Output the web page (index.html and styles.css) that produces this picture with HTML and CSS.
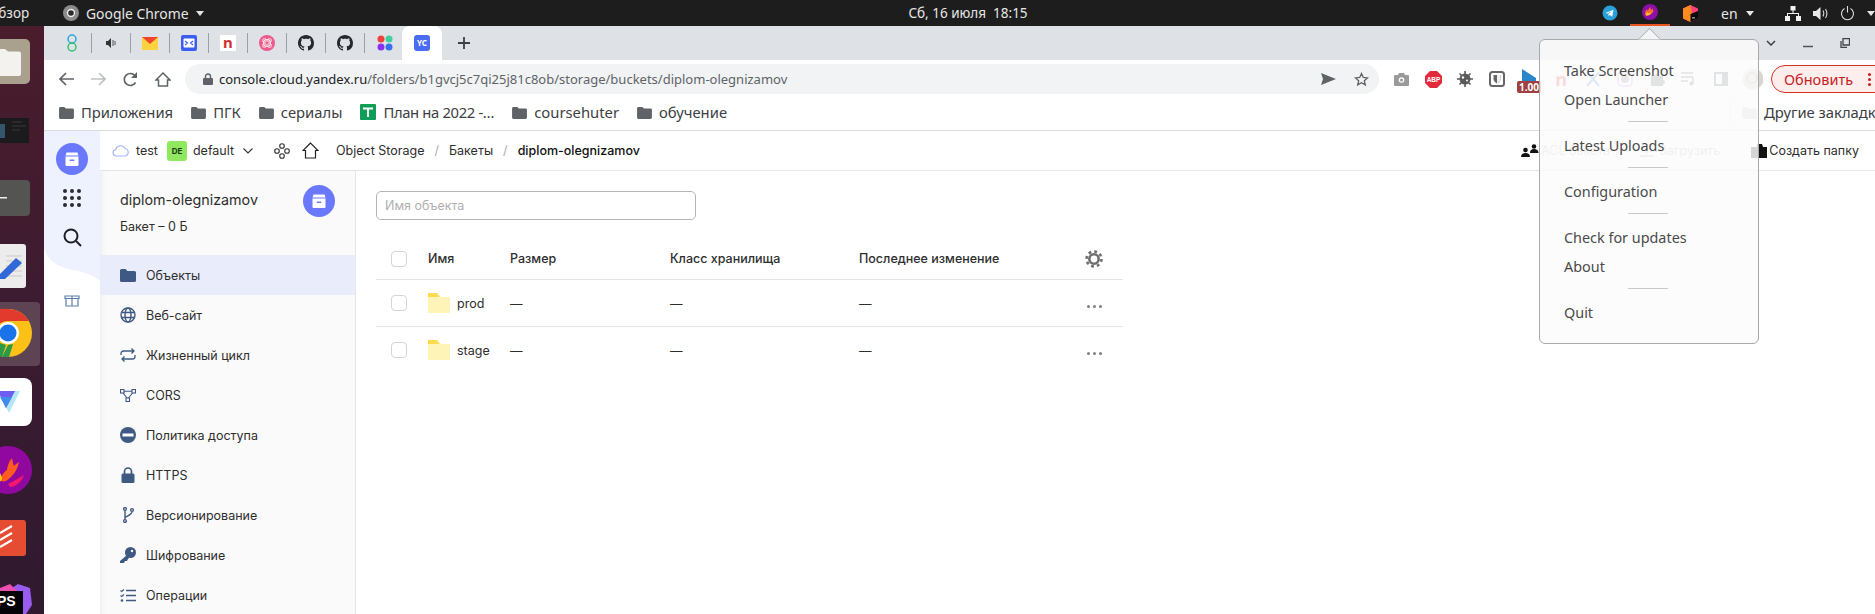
FILE: index.html
```html
<!DOCTYPE html>
<html>
  <head>
    <meta charset="utf-8">
    <link rel="stylesheet" href="styles.css">
  </head>
  <body>
    <svg class="defs" width="0" height="0">
      <symbol id="bm-folder" viewBox="0 0 16 14"><path d="M1.5 1h4.2l1.6 1.8h7.2c.8 0 1.5.6 1.5 1.4v8.3c0 .8-.7 1.5-1.5 1.5h-13C.7 14 0 13.300 0 12.500V2.500C0 1.700.7 1 1.500 1z" fill="#5f6368"/></symbol>
      <symbol id="octocat" viewBox="0 0 16 16"><path d="M8 0C3.580 0 0 3.580 0 8c0 3.540 2.290 6.530 5.470 7.590.4.07.55-.17.55-.38 0-.19-.01-.82-.01-1.490-2.010.37-2.530-.49-2.690-.94-.09-.23-.48-.94-.82-1.130-.28-.15-.68-.52-.01-.53.63-.01 1.080.58 1.230.82.72 1.210 1.870.87 2.330.66.07-.52.28-.87.51-1.070-1.780-.2-3.640-.89-3.640-3.950 0-.87.31-1.590.82-2.150-.08-.2-.36-1.020.08-2.120 0 0 .67-.21 2.200.82.64-.18 1.320-.27 2-.27.68 0 1.360.09 2 .27 1.530-1.040 2.200-.82 2.200-.82.44 1.100.16 1.920.08 2.120.51.56.82 1.270.82 2.150 0 3.070-1.870 3.750-3.650 3.950.29.25.54.73.54 1.480 0 1.070-.01 1.930-.01 2.200 0 .21.15.46.55.38A8.013 8.013 0 0016 8c0-4.420-3.580-8-8-8z" fill="#24292e"/></symbol>
      <symbol id="bucket" viewBox="0 0 32 32"><circle cx="16" cy="16" r="16" fill="#6a78fb"/><path d="M10.500 9.500h11l1 3h-13zM9.500 13.500h13v8.500a1 1 0 0 1-1 1h-11a1 1 0 0 1-1-1z" fill="#fff"/><rect x="13.500" y="16.500" width="5" height="1.600" rx=".8" fill="#6a78fb"/></symbol>
      <symbol id="row-folder" viewBox="0 0 22 20"><path d="M0 0h9l3 4H0z" fill="#ffdb4d"/><rect y="4" width="22" height="16" fill="#fff4b8"/></symbol>
    </svg>

    <div class="topbar">
      <span class="activities">Обзор</span>
      <span class="app-name">
        <svg width="16" height="16" viewBox="0 0 16 16"><circle cx="8" cy="8" r="8" fill="#8b8b8b"/><circle cx="8" cy="8" r="3.500" fill="#2b2b2b" stroke="#eee" stroke-width="1.400"/></svg>
        Google Chrome <i class="caret"></i>
      </span>
      <span class="clock">Сб, 16 июля&nbsp; 18:15</span>
      <div class="tray">
        <span class="tray-item">
          <svg width="16" height="16" viewBox="0 0 16 16"><circle cx="8" cy="8" r="7.500" fill="#2a9fd8"/><path d="M3.500 8l8-3.200-1.300 6.900-2.500-1.800-1.200 1.200-.2-2.200 3.400-2.700-4.300 2.400z" fill="#fff"/></svg>
        </span>
        <span class="tray-item tray-active">
          <svg width="16" height="16" viewBox="0 0 16 16"><circle cx="8" cy="8" r="8" fill="#8c0fa8"/><path d="M3 11c-.5-3 1-4.500 2-6 .3 1 .6 1.500 1 2 .3-1.500 1-3 2.500-4-.2 1.500.2 2.500.8 3 .4-.8 1-1.300 1.800-1.500-.2 1-.1 2 .4 2.500-1 2.500-3 4-5.500 4.500-1 .2-2 .2-3-.5z" fill="#ff6a2b"/><path d="M4 11.500c0-1.500.8-2.500 1.500-3.500.3 1 .8 1.300 1.300 1.500L9 8c-.4 2.200-2.500 4-5 3.500z" fill="#ffd21f"/></svg>
        </span>
        <span class="tray-item">
          <svg width="15" height="17" viewBox="0 0 15 17"><path d="M7.500 0L15 3.500v10L7.500 17 0 13.500v-10z" fill="#ff3f7a"/><path d="M0 3.500L7.500 0 9 8 7.500 17 0 13.500z" fill="#ff8a1f"/><path d="M15 6v7.500L7.500 17V9z" fill="#0b0b0b"/><rect x="9" y="12.500" width="3" height=".8" fill="#fff"/></svg>
        </span>
        <span class="lang">en <i class="caret"></i></span>
        <span class="sys-icons">
          <svg width="16" height="15" viewBox="0 0 16 15"><path d="M5.500 0h5v4.500h-5zM0 10h5v5H0zM11 10h5v5h-5zM7.500 4.500h1V7H14v3h-1V8H3v2H2V7h5.500z" fill="#f2f2f2"/></svg>
          <svg width="15" height="15" viewBox="0 0 15 15"><path d="M0 5h3l4.500-4v13L3 10H0z" fill="#e8e8e8"/><path d="M10 4.500c1 1.500 1 4.500 0 6M12.500 3c1.800 2.500 1.800 6.500 0 9" fill="none" stroke="#cfcfcf" stroke-width="1.200"/></svg>
          <svg width="15" height="15" viewBox="0 0 15 15"><path d="M4.500 2.500a6 6 0 1 0 6 0M7.500 0v6.500" fill="none" stroke="#e0e0e0" stroke-width="1.100"/></svg>
          <i class="caret"></i>
        </span>
      </div>
    </div>

    <div class="desktop">
      <svg class="dock" width="44" height="588" viewBox="0 26 44 588">
        <defs>
          <linearGradient id="dock-bg" x1="0" y1="0" x2="0" y2="1"><stop offset="0" stop-color="#4a1d2c"/><stop offset=".45" stop-color="#3d1b30"/><stop offset="1" stop-color="#2f1a30"/></linearGradient>
        </defs>
        <rect y="26" width="44" height="588" fill="url(#dock-bg)"/>
        <rect x="-10" y="39" width="40" height="45" rx="5" fill="#a9a18d"/>
        <path d="M-6 49h11l3 2.500h11a2 2 0 0 1 2 2V74a2 2 0 0 1-2 2H-6z" fill="#f4f2ee"/>
        <rect x="0" y="118" width="29" height="25" fill="#1b1b1d"/>
        <rect x="0" y="124" width="5" height="14" fill="#34556b"/>
        <path d="M12 122h10M12 126h14M12 130h8" stroke="#3a3a3a"/>
        <rect x="-10" y="180" width="40" height="36" rx="4" fill="#545452"/>
        <rect x="0" y="197" width="7" height="1.500" fill="#f0f0f0"/>
        <rect x="-10" y="244" width="36" height="44" rx="3" fill="#ececec"/>
        <path d="M6 256h16M6 261h16M6 266h16M6 271h16M6 276h16" stroke="#c9c9c9"/>
        <path d="M0 274L16 258l6 5L5 279l-5 0z" fill="#3068d8"/>
        <rect x="-10" y="302" width="50" height="64" rx="4" fill="#5e4453"/>
        <circle cx="8" cy="333" r="24" fill="#fbc116"/>
        <path d="M8 309a24 24 0 0 1 21 12H8a12 12 0 0 0-12 8l-8-14A24 24 0 0 1 8 309z" fill="#e23b2e"/>
        <path d="M-12 345L0 343l6 2-4 12A24 24 0 0 1-12 345z" fill="#2a9a49"/>
        <path d="M2 357l6-12 5-1-4 13z" fill="#2a9a49"/>
        <circle cx="8" cy="333" r="11" fill="#fff"/>
        <circle cx="8" cy="333" r="8.500" fill="#1a73e8"/>
        <rect x="-10" y="378" width="42" height="48" rx="8" fill="#fff"/>
        <path d="M-2 391h22l-11 22z" fill="#b4e6f5"/>
        <path d="M-2 391h17l-9 17z" fill="#6f5cf0"/>
        <path d="M0 397h12l-6 11z" fill="#3f8cea"/>
        <circle cx="8" cy="470" r="24" fill="#90089f"/>
        <path d="M0 480c3-8 7-10 7-10 .5-4 2-9 5-12 .5 3 1 6 2 8 1-1 3-3 5-4-1 6-5 14-13 19-3 1-5 0-6-1z" fill="#ff5a1f"/>
        <path d="M8 484c6-3 11-6 16-9-2 6-8 12-14 12z" fill="#f4176b"/>
        <path d="M-4 470c3 2 5 3 6 8 0 3-2 4-6 4z" fill="#ffc712"/>
        <rect x="-10" y="520" width="36" height="36" rx="3" fill="#e54c32"/>
        <path d="M0 533l12-7M0 540l12-7M0 547l12-7" stroke="#fff" stroke-width="2.200"/>
        <path d="M6 592l12-8 12 4 2 17-6 9H0z" fill="#9a5bf0"/>
        <path d="M0 588l10-4 8 8H0z" fill="#e84fae"/>
        <rect x="0" y="591" width="23" height="23" fill="#050208"/>
        <text class="dock-ps" x="-3" y="606">PS</text>
      </svg>

      <div class="browser">
        <div class="tabstrip">
          <div class="fav-tab">
            <svg width="16" height="18" viewBox="0 0 16 18"><circle cx="8" cy="5" r="4" fill="none" stroke="#29a8e0" stroke-width="1.500"/><circle cx="8" cy="13" r="4" fill="none" stroke="#35c46b" stroke-width="1.500"/></svg>
          </div>
          <div class="fav-tab">
            <svg width="10" height="10" viewBox="0 0 10 10"><path d="M0 3h2l3-3v10L2 7H0z" fill="#333"/><path d="M7 2v6M9 3v4" stroke="#555"/></svg>
          </div>
          <div class="fav-tab">
            <svg width="16" height="13" viewBox="0 0 16 13"><rect width="16" height="13" fill="#fcd33e"/><path d="M0 0h16L8 7z" fill="#f0452a"/></svg>
          </div>
          <div class="fav-tab">
            <svg width="16" height="16" viewBox="0 0 16 16"><rect width="16" height="16" rx="2" fill="#3c5ef0"/><rect x="2.500" y="3.500" width="11" height="9" rx="1" fill="#fff"/><path d="M4 6l2.500 2L4 10M12 6L9.500 8l2.500 2" fill="none" stroke="#3c5ef0" stroke-width="1.200"/></svg>
          </div>
          <div class="fav-tab"><span class="fav-n">n</span></div>
          <div class="fav-tab">
            <svg width="16" height="16" viewBox="0 0 16 16"><circle cx="8" cy="8" r="8" fill="#ee5a8a"/><circle cx="8" cy="8" r="3.500" fill="none" stroke="#fff" stroke-width="1.200"/><circle cx="5.500" cy="5.500" r="2" fill="none" stroke="#ffd0df"/><circle cx="10.500" cy="5.500" r="2" fill="none" stroke="#ffd0df"/><circle cx="5.500" cy="10.500" r="2" fill="none" stroke="#ffd0df"/><circle cx="10.500" cy="10.500" r="2" fill="none" stroke="#ffd0df"/></svg>
          </div>
          <div class="fav-tab"><svg width="16" height="16"><use href="#octocat"/></svg></div>
          <div class="fav-tab"><svg width="16" height="16"><use href="#octocat"/></svg></div>
          <div class="fav-tab fav-last">
            <svg width="16" height="16" viewBox="0 0 16 16"><circle cx="4" cy="4" r="3.500" fill="#f0413c"/><circle cx="12" cy="4" r="3.500" fill="#3fcf9f"/><circle cx="4" cy="12" r="3.500" fill="#8a2ff0"/><circle cx="12" cy="12" r="3.500" fill="#3570f0"/></svg>
          </div>
          <div class="tab-active"><span class="fav-yc">YC</span></div>
          <svg class="new-tab" width="12" height="12" viewBox="0 0 12 12"><path d="M6 0v12M0 6h12" stroke="#3c4043" stroke-width="1.800"/></svg>
          <div class="win-controls">
            <svg width="10" height="6" viewBox="0 0 10 6"><path d="M1 1l4 4 4-4" fill="none" stroke="#3c4043" stroke-width="1.500"/></svg>
            <svg width="10" height="10" viewBox="0 0 10 10"><path d="M0 8.500h10" stroke="#555" stroke-width="1.500"/></svg>
            <svg width="10" height="10" viewBox="0 0 10 10"><path d="M3 .5h6.500V7H3zM1 3v6.500h6" fill="none" stroke="#444" stroke-width="1.300"/></svg>
            <svg width="8" height="10" viewBox="0 0 8 10"><path d="M0 1l8 8M8 1L0 9" stroke="#444" stroke-width="1.500"/></svg>
          </div>
        </div>

        <div class="toolbar">
          <svg width="15" height="14" viewBox="0 0 15 14"><path d="M15 7H2M7 1L1 7l6 6" fill="none" stroke="#5f6368" stroke-width="1.700"/></svg>
          <svg class="nav-next" width="15" height="14" viewBox="0 0 15 14"><path d="M0 7h13M8 1l6 6-6 6" fill="none" stroke="#bdc1c6" stroke-width="1.700"/></svg>
          <svg class="nav-next" width="15" height="15" viewBox="0 0 15 15"><path d="M12.500 10.500a6 6 0 1 1-.3-6.500" fill="none" stroke="#5f6368" stroke-width="1.700"/><path d="M14 0v6H8z" fill="#5f6368"/></svg>
          <svg class="nav-next" width="16" height="15" viewBox="0 0 16 15"><path d="M8 1L1 8h2.500v6h9V8H15z" fill="none" stroke="#5f6368" stroke-width="1.500"/></svg>
          <div class="omnibox">
            <svg width="10" height="12" viewBox="0 0 10 12"><path d="M2.500 5V3.500a2.500 2.500 0 0 1 5 0V5" fill="none" stroke="#5f6368" stroke-width="1.400"/><rect y="5" width="10" height="7" rx="1" fill="#5f6368"/></svg>
            <span class="url"><b>console.cloud.yandex.ru</b>/folders/b1gvcj5c7qi25j81c8ob/storage/buckets/diplom-olegnizamov</span>
            <svg class="omni-send" width="15" height="12" viewBox="0 0 15 12"><path d="M0 0l15 6-15 6 2-6z" fill="#5f6368"/></svg>
            <svg class="omni-star" width="15" height="15" viewBox="0 0 15 15"><path d="M7.500 1.500l1.800 4 4.200.4-3.200 2.800 1 4.200-3.800-2.200-3.800 2.200 1-4.200L1.500 5.900l4.200-.4z" fill="none" stroke="#5f6368" stroke-width="1.300"/></svg>
          </div>
          <div class="extensions">
            <span class="ext"><svg width="15" height="13" viewBox="0 0 15 13"><path d="M1 2h3l1-2h5l1 2h3a1 1 0 0 1 1 1v9a1 1 0 0 1-1 1H1a1 1 0 0 1-1-1V3a1 1 0 0 1 1-1z" fill="#9a9a9a"/><circle cx="7.500" cy="7" r="2.800" fill="#fff"/><circle cx="7.500" cy="7" r="1.500" fill="#9a9a9a"/></svg></span>
            <span class="ext"><svg width="17" height="17" viewBox="0 0 17 17"><path d="M5 0h7l5 5v7l-5 5H5l-5-5V5z" fill="#e3293c"/><text class="abp" x="8.500" y="11">ABP</text></svg></span>
            <span class="ext"><svg width="16" height="16" viewBox="0 0 16 16"><circle cx="8" cy="8" r="5.500" fill="#5a5a5a"/><path d="M8 0v16M0 8h16M2.500 2.500l11 11M13.500 2.500l-11 11" stroke="#5a5a5a" stroke-width="1.600"/><circle cx="6" cy="6.500" r="1.200" fill="#fff"/><circle cx="10" cy="9.500" r="1" fill="#fff"/></svg></span>
            <span class="ext"><svg width="16" height="16" viewBox="0 0 16 16"><rect x="1" y="1" width="14" height="14" rx="2.500" fill="#fff" stroke="#666" stroke-width="2"/><path d="M4.500 4h7v4c0 2-1.500 3.200-3.500 4.500C6 11.200 4.500 10 4.500 8z" fill="#666"/><path d="M8 4h3.500v4c0 2-1.500 3.200-3.500 4.500z" fill="#eee"/></svg></span>
            <span class="ext ext-flag">
              <svg width="16" height="12" viewBox="0 0 16 12"><path d="M1 0l14 9v3H1z" fill="#2a86c8"/></svg>
              <span class="ext-badge">1.00</span>
            </span>
            <span class="ext"><span class="ext-n">n</span></span>
            <span class="ext"><svg width="16" height="16" viewBox="0 0 16 16"><path d="M2 15C6 10 10 6 14 1M2 1c4 5 8 9 12 14" fill="none" stroke="#3f7fe0" stroke-width="2"/></svg></span>
            <span class="ext"><svg width="16" height="16" viewBox="0 0 16 16"><rect x="1" y="1" width="14" height="14" rx="4" fill="none" stroke="#e0a0f0" stroke-width="2"/><circle cx="8" cy="8" r="4" fill="#888"/></svg></span>
            <span class="ext"><svg width="15" height="15" viewBox="0 0 15 15"><path d="M1 4h3.500a2 2 0 0 1 4 0H13v4a2 2 0 0 1 0 4v2H1z" fill="#5f6368"/></svg></span>
            <span class="ext"><svg width="16" height="14" viewBox="0 0 16 14"><path d="M0 1h12M0 5h12M0 9h7" stroke="#5f6368" stroke-width="1.500"/><path d="M12 5v6" stroke="#5f6368" stroke-width="1.500"/><circle cx="10.500" cy="11.500" r="2" fill="#5f6368"/></svg></span>
            <span class="ext"><svg width="14" height="14" viewBox="0 0 14 14"><rect x="1" y="1" width="12" height="12" fill="none" stroke="#5f6368" stroke-width="2"/><rect x="8" y="1" width="5" height="12" fill="#5f6368"/></svg></span>
            <span class="ext ext-avatar"><svg width="20" height="22" viewBox="0 0 20 22"><circle cx="15" cy="11" r="5" fill="#2fd37a"/><circle cx="10" cy="11" r="10.500" fill="#d9d5d0"/><circle cx="9" cy="10" r="5" fill="none" stroke="#b5a89c" stroke-width="2"/></svg></span>
          </div>
          <div class="update-btn"><span>Обновить</span><i class="kebab"></i></div>
        </div>

        <div class="bookmarks">
          <span class="bm"><svg width="15" height="13"><use href="#bm-folder"/></svg>Приложения</span>
          <span class="bm"><svg width="15" height="13"><use href="#bm-folder"/></svg>ПГК</span>
          <span class="bm"><svg width="15" height="13"><use href="#bm-folder"/></svg>сериалы</span>
          <span class="bm bm-plan">
            <svg width="16" height="16" viewBox="0 0 16 16"><rect width="16" height="16" rx="1" fill="#0f9d58"/><path d="M3 4.500h10M8 4.500V13" stroke="#fff" stroke-width="1.800"/></svg>
            План на 2022 -…
          </span>
          <span class="bm"><svg width="15" height="13"><use href="#bm-folder"/></svg>coursehuter</span>
          <span class="bm"><svg width="15" height="13"><use href="#bm-folder"/></svg>обучение</span>
          <span class="bm bm-other"><svg width="15" height="13"><use href="#bm-folder"/></svg>Другие закладки</span>
        </div>

        <div class="cloud-page">
          <div class="rail">
            <svg class="rail-bg" width="56" height="153" viewBox="0 0 56 153"><path d="M0 0h56v150C40 134 10 145 0 118z" fill="#eef1fe"/></svg>
            <svg class="rail-logo" width="32" height="32"><use href="#bucket"/></svg>
            <svg class="rail-icon" width="18" height="18" viewBox="0 0 18 18">
              <g fill="#2b2b33"><circle cx="2" cy="2" r="2"/><circle cx="9" cy="2" r="2"/><circle cx="16" cy="2" r="2"/><circle cx="2" cy="9" r="2"/><circle cx="9" cy="9" r="2"/><circle cx="16" cy="9" r="2"/><circle cx="2" cy="16" r="2"/><circle cx="9" cy="16" r="2"/><circle cx="16" cy="16" r="2"/></g>
            </svg>
            <svg class="rail-search" width="19" height="19" viewBox="0 0 19 19"><circle cx="8" cy="8" r="6.500" fill="none" stroke="#1f1f26" stroke-width="2"/><path d="M13 13l5 5" stroke="#1f1f26" stroke-width="2"/></svg>
            <svg class="rail-gift" width="16" height="12" viewBox="0 0 16 12"><path d="M1 1h14v2.500h-1V11H2V3.500H1zM2 3.500h12M8 1v10" fill="none" stroke="#5e80a6" stroke-width="1.200"/></svg>
          </div>

          <div class="cloud-body">
            <div class="crumbs">
              <svg class="crumb-cloud" width="17" height="13" viewBox="0 0 17 13"><path d="M4 12a3.300 3.300 0 0 1-.3-6.500A5 5 0 0 1 13 4.500 3.800 3.800 0 0 1 13 12z" fill="none" stroke="#a8b6f7" stroke-width="1.200"/></svg>
              <span class="crumb-test">test</span>
              <span class="badge-de">DE</span>
              <span class="crumb-default">default</span>
              <svg class="crumb-chev" width="10" height="6" viewBox="0 0 10 6"><path d="M.5.500L5 5 9.500.500" fill="none" stroke="#333" stroke-width="1.100"/></svg>
              <svg class="crumb-cluster" width="16" height="16" viewBox="0 0 16 16"><g fill="none" stroke="#333" stroke-width="1.100"><circle cx="8" cy="3" r="2.300"/><circle cx="3" cy="8" r="2.300"/><circle cx="13" cy="8" r="2.300"/><circle cx="8" cy="13" r="2.300"/></g></svg>
              <svg class="crumb-home" width="17" height="17" viewBox="0 0 17 17"><path d="M8.500 1L1 8.500h2.500V16h10V8.500H16z" fill="none" stroke="#222" stroke-width="1.200"/></svg>
              <span class="crumb-item">Object Storage</span>
              <span class="crumb-sep">/</span>
              <span>Бакеты</span>
              <span class="crumb-sep">/</span>
              <span class="crumb-current">diplom-olegnizamov</span>
              <div class="crumb-actions">
                <span class="act act-acl">
                  <svg width="18" height="13" viewBox="0 0 18 13"><circle cx="4.500" cy="6" r="2.300" fill="#111"/><path d="M0 13c0-3 2-4 4.500-4S9 10 9 13z" fill="#111"/><circle cx="13" cy="2.500" r="2.300" fill="#111"/><path d="M9 9c0-3 1.500-4 4-4s4.500 1 4.500 4z" fill="#111"/></svg>
                  <span class="act-off">ACL бакета</span>
                </span>
                <span class="act act-upload">
                  <svg width="14" height="13" viewBox="0 0 14 13"><path d="M7 0v9M0 12h14" stroke="#aaa" stroke-width="1.500"/></svg>
                  <span class="act-off">Загрузить</span>
                </span>
                <span class="act">
                  <svg width="16" height="15" viewBox="0 0 16 15"><path d="M0 4h6V1h5l1 3h4v11H0z" fill="#111"/></svg>
                  Создать папку
                </span>
              </div>
            </div>

            <div class="bucket-view">
              <div class="sidebar">
                <div class="bucket-head">
                  <div>
                    <div class="bucket-name">diplom-olegnizamov</div>
                    <div class="bucket-size">Бакет – 0 Б</div>
                  </div>
                  <svg width="32" height="32"><use href="#bucket"/></svg>
                </div>
                <div class="menu-item active">
                  <svg width="16" height="13" viewBox="0 0 16 13"><path d="M0 1.500A1.500 1.500 0 0 1 1.500 0h4L7.500 2h7A1.500 1.500 0 0 1 16 3.500v8a1.500 1.500 0 0 1-1.500 1.500h-13A1.500 1.500 0 0 1 0 11.500z" fill="#3f5a82"/></svg>
                  Объекты
                </div>
                <div class="menu-item">
                  <svg width="16" height="16" viewBox="0 0 16 16"><g fill="none" stroke="#3f5a82" stroke-width="1.400"><circle cx="8" cy="8" r="7"/><ellipse cx="8" cy="8" rx="3" ry="7"/><path d="M1.500 5.500h13M1.500 10.500h13"/></g></svg>
                  Веб-сайт
                </div>
                <div class="menu-item">
                  <svg width="16" height="14" viewBox="0 0 16 14"><path d="M1 7V5.500A2.500 2.500 0 0 1 3.500 3H14M11.500.500L14 3l-2.500 2.500M15 7v1.500A2.500 2.500 0 0 1 12.500 11H2M4.500 8.500L2 11l2.500 2.500" fill="none" stroke="#3f5a82" stroke-width="1.300"/></svg>
                  Жизненный цикл
                </div>
                <div class="menu-item">
                  <svg width="16" height="13" viewBox="0 0 16 13"><g fill="none" stroke="#3f5a82" stroke-width="1.100"><rect x=".5" y=".5" width="3.500" height="3.500"/><rect x="12" y=".5" width="3.500" height="3.500"/><rect x="6" y="9" width="3.500" height="3.500"/><path d="M4 2.200h8M3 4l4 5M8.500 9L12.500 4"/></g></svg>
                  CORS
                </div>
                <div class="menu-item">
                  <svg width="16" height="16" viewBox="0 0 16 16"><circle cx="8" cy="8" r="8" fill="#3f5a82"/><rect x="2.500" y="6.500" width="11" height="3" fill="#fff"/></svg>
                  Политика доступа
                </div>
                <div class="menu-item">
                  <svg width="16" height="16" viewBox="0 0 16 16"><path d="M4.500 7V4.500a3.500 3.500 0 0 1 7 0V7" fill="none" stroke="#3f5a82" stroke-width="1.700"/><rect x="1.500" y="6.500" width="13" height="9.500" rx="1.500" fill="#3f5a82"/></svg>
                  HTTPS
                </div>
                <div class="menu-item">
                  <svg width="16" height="16" viewBox="0 0 16 16"><g fill="none" stroke="#3f5a82" stroke-width="1.400"><circle cx="5" cy="2" r="1.400"/><circle cx="5" cy="14" r="1.400"/><circle cx="12" cy="3" r="1.400"/><path d="M5 3.500v9M12 4.500c0 3-4 4-7 6"/></g></svg>
                  Версионирование
                </div>
                <div class="menu-item">
                  <svg width="16" height="16" viewBox="0 0 16 16"><circle cx="10.500" cy="5.500" r="5.500" fill="#3f5a82"/><path d="M7 8l-7 6v2h4l1-2h2l1-2 1-1z" fill="#3f5a82"/><circle cx="12" cy="4" r="1.200" fill="#fafafa"/></svg>
                  Шифрование
                </div>
                <div class="menu-item">
                  <svg width="16" height="13" viewBox="0 0 16 13"><path d="M6 1.500h10M6 6.500h10M6 11.500h10" stroke="#3f5a82" stroke-width="1.500"/><path d="M.5 1.500l1.200 1L4 .5M.5 6.500l1.200 1L4 5.500" fill="none" stroke="#3f5a82" stroke-width="1.100"/><circle cx="2" cy="11.500" r="1.300" fill="#3f5a82"/></svg>
                  Операции
                </div>
              </div>

              <div class="objects">
                <input class="search" type="text" placeholder="Имя объекта">
                <table class="object-table">
                  <thead>
                    <tr>
                      <th class="col-check"><i class="check"></i></th>
                      <th class="col-name">Имя</th>
                      <th class="col-size">Размер</th>
                      <th class="col-class">Класс хранилища</th>
                      <th class="col-date">Последнее изменение</th>
                      <th class="col-actions">
                        <svg width="18" height="18" viewBox="0 0 18 18"><g fill="none" stroke="#6e6e6e"><circle cx="9" cy="9" r="4.700" stroke-width="2.600"/><circle cx="9" cy="9" r="7.500" stroke-width="2.500" stroke-dasharray="2.900 2.990"/></g></svg>
                      </th>
                    </tr>
                  </thead>
                  <tbody>
                    <tr>
                      <td><i class="check"></i></td>
                      <td><span class="obj-name"><svg width="22" height="20"><use href="#row-folder"/></svg>prod</span></td>
                      <td>—</td>
                      <td>—</td>
                      <td>—</td>
                      <td class="col-actions"><i class="dots"></i></td>
                    </tr>
                    <tr>
                      <td><i class="check"></i></td>
                      <td><span class="obj-name"><svg width="22" height="20"><use href="#row-folder"/></svg>stage</span></td>
                      <td>—</td>
                      <td>—</td>
                      <td>—</td>
                      <td class="col-actions"><i class="dots"></i></td>
                    </tr>
                  </tbody>
                </table>
              </div>
            </div>
          </div>
        </div>
      </div>
    </div>

    <div class="popup">
      <div class="popup-item">Take Screenshot</div>
      <div class="popup-item">Open Launcher</div>
      <hr class="popup-sep">
      <div class="popup-item">Latest Uploads</div>
      <hr class="popup-sep">
      <div class="popup-item">Configuration</div>
      <hr class="popup-sep">
      <div class="popup-item">Check for updates</div>
      <div class="popup-item">About</div>
      <hr class="popup-sep">
      <div class="popup-item">Quit</div>
    </div>
  </body>
</html>
```

FILE: styles.css
```css
html,
body {
  margin: 0;
  height: 614px;
  overflow: hidden;
}
body {
  font-family: "Noto Sans", sans-serif;
  background: #fff;
  color: #333;
}
.defs {
  position: absolute;
}
svg {
  display: block;
  flex: none;
}

/* gnome bar */
.topbar {
  height: 26px;
  background: #1d1d1d;
  color: #e6e6e6;
  font-size: 13.5px;
  display: flex;
  align-items: center;
}
.activities {
  margin-left: -12px;
  width: 75px;
}
.app-name {
  display: flex;
  align-items: center;
  gap: 7px;
  width: 300px;
  font-size: 13.9px;
}
.caret {
  display: inline-block;
  border: 4.5px solid transparent;
  border-top: 5px solid #e6e6e6;
  border-bottom: 0;
}
.clock {
  margin-left: 535px;
  width: 140px;
  text-align: center;
}
.tray {
  margin-left: 552px;
  display: flex;
  align-items: center;
  height: 26px;
}
.tray-item {
  width: 40px;
  height: 26px;
  display: flex;
  align-items: center;
  justify-content: center;
  box-sizing: border-box;
}
.tray-active {
  border-bottom: 2px solid #e95420;
}
.lang {
  margin-left: 11px;
  display: flex;
  align-items: center;
  gap: 8px;
  font-size: 14px;
}
.sys-icons {
  margin-left: 31px;
  display: flex;
  align-items: center;
  gap: 12px;
}

.desktop {
  display: flex;
  height: 588px;
}
.dock-ps {
  font-family: "Liberation Sans", sans-serif;
  font-size: 14px;
  font-weight: 700;
  fill: #fff;
}
.browser {
  flex: 1;
  min-width: 0;
  display: flex;
  flex-direction: column;
}

/* tab strip */
.tabstrip {
  height: 34px;
  background: #dee1e6;
  display: flex;
  align-items: center;
  padding-left: 9px;
}
.fav-tab {
  width: 39px;
  height: 20px;
  display: flex;
  align-items: center;
  justify-content: center;
  border-right: 1px solid #9aa0a6;
  box-sizing: border-box;
}
.fav-last {
  border-right: 0;
}
.fav-n {
  width: 16px;
  height: 16px;
  background: #fff;
  color: #d32f2f;
  font-size: 15px;
  font-weight: 700;
  line-height: 14px;
  text-align: center;
}
.tab-active {
  width: 40px;
  height: 34px;
  margin-left: -2px;
  background: #fff;
  border-radius: 8px 8px 0 0;
  display: flex;
  align-items: center;
  justify-content: center;
}
.fav-yc {
  width: 16px;
  height: 16px;
  border-radius: 3px;
  background: #4a6cf0;
  color: #fff;
  font-size: 8px;
  font-weight: 700;
  line-height: 16px;
  text-align: center;
}
.new-tab {
  margin-left: 16px;
}
.win-controls {
  margin-left: auto;
  display: flex;
  align-items: center;
  width: 108px;
  gap: 27px;
  margin-right: 1px;
}

/* toolbar */
.toolbar {
  height: 36px;
  box-sizing: border-box;
  padding: 2px 0 0 15px;
  display: flex;
  align-items: center;
}
.nav-next {
  margin-left: 17px;
}
.omnibox {
  margin-left: 14px;
  width: 1194px;
  height: 30px;
  flex: none;
  background: #f1f3f4;
  border-radius: 15px;
  display: flex;
  align-items: center;
  padding-left: 18px;
  box-sizing: border-box;
  font-size: 13px;
  color: #5f6368;
}
.url {
  margin-left: 6px;
  white-space: nowrap;
}
.url b {
  font-weight: 400;
  color: #202124;
}
.omni-send {
  margin-left: auto;
}
.omni-star {
  margin-left: 18px;
  margin-right: 10px;
}
.extensions {
  display: flex;
  align-items: center;
  margin-left: 6px;
}
.ext {
  width: 32px;
  display: flex;
  align-items: center;
  justify-content: center;
  position: relative;
}
.abp {
  font-family: "Liberation Sans", sans-serif;
  font-size: 6.5px;
  font-weight: 700;
  fill: #fff;
  text-anchor: middle;
}
.ext-flag {
  height: 24px;
  margin-top: 4px;
  align-items: flex-start;
}
.ext-badge {
  position: absolute;
  top: 12px;
  left: 4px;
  width: 24px;
  background: #a04040;
  color: #fff;
  border-radius: 2px;
  font-size: 10px;
  font-weight: 700;
  line-height: 12px;
  text-align: center;
}
.ext-n {
  color: #d33;
  font-size: 18px;
  font-weight: 700;
  line-height: 18px;
}
.update-btn {
  margin-left: 2px;
  flex: none;
  width: 140px;
  height: 28px;
  box-sizing: border-box;
  border: 1px solid #d93025;
  border-radius: 14px;
  background: #fbeeec;
  color: #c5221f;
  font-size: 14.5px;
  display: flex;
  align-items: center;
  padding-left: 12px;
}
.kebab {
  margin-left: 15px;
  width: 3px;
  height: 3px;
  border-radius: 50%;
  background: #c5221f;
  box-shadow: 0 -5px #c5221f, 0 5px #c5221f;
}

/* bookmarks */
.bookmarks {
  height: 34px;
  box-sizing: content-box;
  display: flex;
  align-items: center;
  padding-left: 15px;
  gap: 18px;
  border-bottom: 1px solid #dadce0;
  font-size: 14.8px;
  color: #3c4043;
  white-space: nowrap;
  overflow: hidden;
}
.bookmarks .bm {
  position: relative;
  top: -1px;
  display: flex;
  align-items: center;
  gap: 7px;
}
.bookmarks .bm-plan {
  letter-spacing: -0.35px;
}
.bookmarks .bm-other {
  margin-left: 985px;
  padding-left: 11px;
  height: 24px;
  border-left: 1px solid #e5e5e5;
}
.bm-other svg {
  opacity: 0.3;
}

/* cloud console */
.cloud-page {
  flex: 1;
  display: flex;
  min-height: 0;
  font-family: Inter, sans-serif;
  font-size: 12.5px;
  color: #2e2e2e;
}
.rail {
  width: 56px;
  flex: none;
  position: relative;
  display: flex;
  flex-direction: column;
  align-items: center;
  padding-top: 12px;
}
.rail-bg {
  position: absolute;
  left: 0;
  top: 0;
}
.rail-logo,
.rail-icon,
.rail-search,
.rail-gift {
  position: relative;
}
.rail-icon {
  margin-top: 14px;
}
.rail-search {
  margin-top: 21px;
}
.rail-gift {
  margin-top: 48px;
}
.cloud-body {
  flex: 1;
  min-width: 0;
  display: flex;
  flex-direction: column;
}
.crumbs {
  height: 39px;
  flex: none;
  border-bottom: 1px solid #e5e5e5;
  display: flex;
  align-items: center;
  padding-left: 12px;
  white-space: nowrap;
}
.crumb-test {
  margin-left: 7px;
}
.badge-de {
  margin-left: 9px;
  width: 20px;
  height: 20px;
  border-radius: 3px;
  background: #8fe85f;
  color: #1d3a12;
  font-size: 8px;
  font-weight: 700;
  line-height: 20px;
  text-align: center;
}
.crumb-default {
  margin-left: 6px;
}
.crumb-chev {
  margin-left: 9px;
}
.crumb-cluster {
  margin-left: 21px;
}
.crumb-home {
  margin-left: 12px;
}
.crumb-item {
  margin-left: 17px;
}
.crumb-sep {
  color: #aaa;
  margin: 0 10px;
}
.crumb-current {
  font-weight: 500;
  color: #111;
}
.crumb-actions {
  margin-left: auto;
  display: flex;
  align-items: center;
  padding-right: 16px;
}
.act {
  display: flex;
  align-items: center;
  gap: 2px;
}
.act-off {
  color: #b5b5b5;
}
.act-upload {
  margin-left: 30px;
  gap: 5px;
  margin-right: 31px;
}

.bucket-view {
  flex: 1;
  display: flex;
  min-height: 0;
}
.sidebar {
  width: 255px;
  flex: none;
  background: #fafafa;
  border-right: 1px solid #e5e5e5;
  box-shadow: inset 6px 0 6px -6px #e4e4e4;
  box-sizing: content-box;
}
.bucket-head {
  height: 84px;
  box-sizing: border-box;
  padding: 14px 20px 0 20px;
  display: flex;
  justify-content: space-between;
  align-items: flex-start;
}
.bucket-name {
  font-size: 14.3px;
  line-height: 20px;
  margin-top: 5px;
}
.bucket-size {
  margin-top: 9px;
  line-height: 16px;
}
.menu-item {
  height: 40px;
  display: flex;
  align-items: center;
  gap: 10px;
  padding-left: 20px;
  white-space: nowrap;
}
.menu-item.active {
  background: #e9edfb;
}
.objects {
  flex: 1;
  padding: 20px 0 0 20px;
}
.search {
  display: block;
  width: 320px;
  height: 29px;
  box-sizing: border-box;
  border: 1px solid #b5b5b5;
  border-radius: 5px;
  padding: 0 8px;
  font: 12.5px Inter, sans-serif;
  outline: none;
}
.search::placeholder {
  color: #b0b0b0;
}
.object-table {
  margin-top: 20px;
  width: 747px;
  table-layout: fixed;
  border-collapse: collapse;
}
.object-table th {
  height: 37px;
  padding: 0 0 2px;
  font-weight: 500;
  text-align: left;
  white-space: nowrap;
  border-bottom: 1px solid #e5e5e5;
}
.object-table td {
  height: 46px;
  padding: 0;
  border-bottom: 1px solid #e5e5e5;
}
.object-table tr:last-child td {
  border-bottom: 0;
}
.col-check {
  width: 52px;
}
.col-name {
  width: 82px;
}
.col-size {
  width: 160px;
}
.col-class {
  width: 189px;
}
.col-date {
  width: 200px;
}
.object-table .col-actions {
  text-align: right;
  padding-right: 20px;
}
.col-actions svg {
  margin-left: auto;
}
.check {
  display: block;
  width: 16px;
  height: 16px;
  margin-left: 15px;
  box-sizing: border-box;
  border: 1px solid #d5d5d5;
  border-radius: 4px;
  background: #fff;
}
.obj-name {
  display: flex;
  align-items: center;
  gap: 7px;
}
.dots {
  display: inline-block;
  width: 3px;
  height: 3px;
  margin-right: 7px;
  border-radius: 50%;
  background: #808080;
  box-shadow: -6px 0 #808080, 6px 0 #808080;
}

/* gnome extension menu */
.popup {
  position: absolute;
  left: 1539px;
  top: 39px;
  width: 220px;
  height: 305px;
  box-sizing: border-box;
  background: rgba(252, 252, 252, 0.84);
  border: 1px solid #a9a9a9;
  border-radius: 6px;
  padding: 16px 0 0 24px;
  font-size: 14.4px;
  color: #4a4a4a;
}
.popup::before {
  content: "";
  position: absolute;
  left: 101px;
  top: -9px;
  width: 17px;
  height: 17px;
  box-sizing: border-box;
  background: rgba(248, 249, 250, 0.84);
  border-left: 1px solid #a9a9a9;
  border-top: 1px solid #a9a9a9;
  transform: rotate(45deg);
  clip-path: polygon(0 0, 100% 0, 0 100%);
}
.popup-item {
  height: 29px;
  line-height: 29px;
  white-space: nowrap;
}
.popup-sep {
  width: 40px;
  height: 1px;
  border: 0;
  margin: 7px 0 9px 64px;
  background: #c8c8c8;
}
```
